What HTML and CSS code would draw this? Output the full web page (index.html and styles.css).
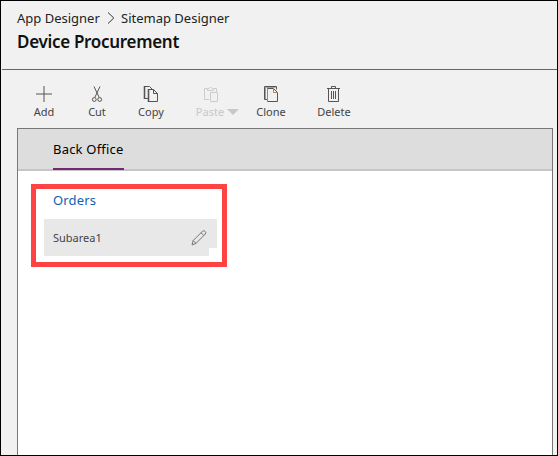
FILE: index.html
```html
<!DOCTYPE html>
<html lang="en">
<head>
<meta charset="utf-8">
<title>Sitemap Designer</title>
<link rel="stylesheet" href="styles.css">
</head>
<body>
<div class="app">
  <header class="header">
    <nav class="crumbs">
      <span class="crumb-app">App Designer</span>
      <svg class="chevron" width="8" height="12" viewBox="0 0 8 12"><path d="M1 .5 6.8 6 1 11.5"/></svg>
      <span class="crumb-site">Sitemap Designer</span>
    </nav>
    <h1 class="title"><span>Device Procurement</span></h1>
  </header>
  <div class="toolbar">
    <button class="tool add">
      <svg width="18" height="18" viewBox="0 0 18 18"><path d="M9 1v16M1 9h16"/></svg>
      <span>Add</span>
    </button>
    <button class="tool cut">
      <svg width="18" height="18" viewBox="0 0 18 18"><path d="M6 1.500l5.200 11M12 1.500l-5.200 11"/><circle cx="6.300" cy="14.500" r="1.900"/><circle cx="11.700" cy="14.500" r="1.900"/></svg>
      <span>Cut</span>
    </button>
    <button class="tool copy">
      <svg width="18" height="18" viewBox="0 0 18 18"><path class="edge" d="M2.500 1v13M6.500 4v13"/><path d="M6 13.500H2.500v-12h5L10 4M6.500 4.500h5l4 4v8h-9zM11.500 4.500v4h4"/></svg>
      <span>Copy</span>
    </button>
    <button class="tool paste" disabled>
      <svg width="18" height="18" viewBox="0 0 18 18"><path d="M7 14.500H2.500v-11H5M12 3.500h2.500V7M5.500 5.500v-2H7q1.500-3 3 0h1.500v2zM8.500 7.500h7v9h-7z"/></svg>
      <span class="label">Paste</span>
      <i class="caret"></i>
    </button>
    <button class="tool clone">
      <svg width="18" height="18" viewBox="0 0 18 18"><path d="M5 14.500H2.500v-13h12v3"/><path class="back" d="M3.500 14V2.500h10"/><path d="M5.500 3.500h6l4 4v9h-10z"/><path class="fold" d="M11.500 3.500v4h4M5.500 4v12"/></svg>
      <span>Clone</span>
    </button>
    <button class="tool delete">
      <svg width="18" height="18" viewBox="0 0 18 18"><path d="M2 3.500h13M6.500 3V1.500h4V3M3.500 4v12.500h10V4M6.500 6v8M8.500 6v8M10.500 6v8"/></svg>
      <span>Delete</span>
    </button>
  </div>
  <main class="canvas">
    <div class="tabs"><div class="tab"><span>Back Office</span></div></div>
    <section class="group">
      <h2><span>Orders</span></h2>
      <div class="subarea">
        <span class="name">Subarea1</span>
        <svg class="pencil" width="18" height="18" viewBox="0 0 18 18"><path d="M2 16l1.200-4.500L12.500 2.200q1.300-1.100 2.600.2 1.300 1.300.2 2.600L6 14.400zM3.200 11.500 6 14.400M11 3.700 13.800 6.500"/></svg>
      </div>
    </section>
  </main>
</div>
</body>
</html>
```
FILE: styles.css
```css
* { box-sizing: border-box; }
body { margin: 0; font-family: "Noto Sans", "Open Sans", sans-serif; }
svg { display: block; fill: none; stroke: #555; stroke-width: 1; }
.app { width: 558px; height: 456px; border: 1px solid #000; background: #f1f1f1; overflow: hidden; display: flex; flex-direction: column; white-space: nowrap; }
.header { height: 69px; border-bottom: 1px solid #666; padding: 7px 0 0 15px; margin-left: 1px; flex: none; }
.crumbs { display: flex; align-items: center; height: 20px; font-size: 13px; color: #222; }
.crumb-app { width: 90px; }
.chevron { width: 8px; margin-right: 6px; stroke: #333; }
.title { margin: 2px 0 0; height: 24px; line-height: 24px; font-size: 17px; font-weight: 600; letter-spacing: -.3px; color: #111; }
.toolbar { height: 58px; flex: none; display: grid; grid-template-columns: 52px 54px 56px 62px 58px 68px; padding: 15px 0 0 17px; }
.tool { border: 0; background: none; padding: 0; font: 11px/16px "Noto Sans", "Open Sans", sans-serif; color: #444; display: flex; flex-direction: column; align-items: center; gap: 1px; position: relative; }
.copy { left: -1px; }
.paste { color: #c8c8c8; }
.paste svg { stroke: #ccc; }
.paste .label { margin-right: 2px; }
.caret { position: absolute; left: 47px; top: 24px; border: 6px solid transparent; border-top-color: #c8c8c8; border-bottom: 0; }
.copy .edge { stroke: #742774; stroke-width: 1.5; }
.back { stroke: #72add0; }
.fold { stroke: #b5854e; }
.canvas { flex: 1; margin: 0 4px 0 16px; border: 1px solid #777; border-bottom: 0; background: #fff; }
.tabs { height: 42px; background: #ddd; border-bottom: 2px solid #c5c5c5; padding-left: 35px; display: flex; }
.tab { width: 71px; height: 41px; border-bottom: 2px solid #742774; padding-top: 11px; font-size: 13px; line-height: 18px; letter-spacing: .2px; }
.group { width: 196px; height: 83px; margin: 13px 0 0 13px; border: 5px solid #ff4343; padding: 1px 0 0 8px; }
.group h2 { margin: 0 0 0 9px; height: 29px; line-height: 20px; font-size: 13px; font-weight: 400; letter-spacing: .15px; color: #1160b7; }
.subarea { width: 173px; height: 37px; background: #e8e8e8; padding: 0 9px 0 9px; display: flex; align-items: center; justify-content: space-between; font-size: 11px; color: #444; clip-path: polygon(0 0, 100% 0, 100% 29px, 165px 29px, 165px 100%, 0 100%); }
.pencil { stroke: #777; }
```
